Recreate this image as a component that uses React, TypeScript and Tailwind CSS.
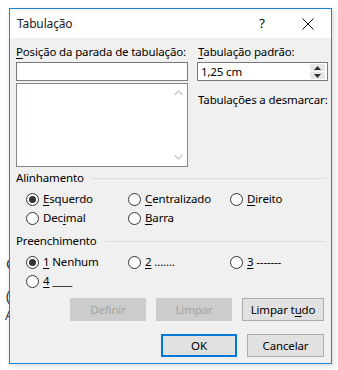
import React from 'react';

const font = { fontFamily: '"Noto Sans", "Open Sans", sans-serif', letterSpacing: '-0.15px' };

const Radio: React.FC<{ checked?: boolean }> = ({ checked }) => (
  <span className="flex h-[13px] w-[13px] shrink-0 items-center justify-center rounded-full border border-[#333333] bg-white">
    {checked && <span className="h-[7px] w-[7px] rounded-full bg-[#333333]" />}
  </span>
);

const Option: React.FC<{ checked?: boolean; width: string; children: React.ReactNode }> = ({ checked, width, children }) => (
  <div className={`flex items-center gap-[4px] ${width}`}>
    <Radio checked={checked} />
    <span className="leading-[16px]">{children}</span>
  </div>
);

const GroupTitle: React.FC<{ title: string }> = ({ title }) => (
  <div className="flex items-center gap-[8px] pr-[5px]">
    <span className="leading-[16px]">{title}</span>
    <span className="h-px flex-1 bg-[#dcdcdc]" />
  </div>
);

const App: React.FC = () => {
  return (
    <div className="relative h-[370px] w-[338px] overflow-hidden bg-white pt-[8px] pl-[9px] text-[11.5px] text-black" style={font}>
      {/* bits of the document behind the dialog */}
      <span className="absolute left-[6px] top-[257px] text-[14px] leading-none text-[#333]">C</span>
      <span className="absolute left-[6px] top-[289px] text-[14px] leading-none text-[#333]">(</span>
      <span className="absolute left-[5px] top-[309px] text-[13px] leading-none text-[#333]">A</span>

      <div className="relative flex h-[356px] w-[323px] flex-col border border-[#1883d7] bg-[#f0f0f0] shadow-[2px_2px_6px_rgba(0,0,0,0.15)]">
        {/* Title bar */}
        <div className="flex h-[29px] items-center bg-white pl-[7px]">
          <span className="flex-1 text-[12px] text-[#222]">Tabulação</span>
          <span className="w-[46px] text-center text-[13px]">?</span>
          <span className="flex w-[46px] items-center justify-center">
            <svg width="12" height="12" viewBox="0 0 12 12">
              <path d="M0.5 0.5 L11.5 11.5 M11.5 0.5 L0.5 11.5" stroke="#111" strokeWidth="1" />
            </svg>
          </span>
        </div>

        {/* Body */}
        <div className="flex flex-1 flex-col pl-[6px] pt-[6px]">
          <div className="flex gap-[9px]">
            <div className="flex w-[172px] flex-col">
              <span className="whitespace-nowrap leading-[16px]">
                <u className="underline-offset-2">P</u>osição da parada de tabulação:
              </span>
              <div className="mt-[2px] h-[19px] border border-[#7a7a7a] bg-white" />
              <div className="relative mt-[2px] h-[84px] border border-[#828790] bg-white">
                <div className="absolute right-0 top-0 flex h-full w-[17px] flex-col items-center justify-between py-[6px]">
                  <svg width="9" height="6" viewBox="0 0 9 6">
                    <path d="M0.5 5 L4.5 1 L8.5 5" stroke="#c4c4c4" strokeWidth="1.2" fill="none" />
                  </svg>
                  <svg width="9" height="6" viewBox="0 0 9 6">
                    <path d="M0.5 1 L4.5 5 L8.5 1" stroke="#c4c4c4" strokeWidth="1.2" fill="none" />
                  </svg>
                </div>
              </div>
            </div>
            <div className="flex w-[131px] flex-col">
              <span className="whitespace-nowrap pl-[1px] leading-[16px]">
                <u className="underline-offset-2">T</u>abulação padrão:
              </span>
              <div className="mt-[2px] flex h-[19px] items-center border border-[#7a7a7a] bg-white pl-[3px]">
                <span className="flex-1">1,25 cm</span>
                <div className="mr-[2px] flex h-[15px] w-[15px] flex-col gap-px">
                  <div className="flex flex-1 items-center justify-center bg-[#e6e6e6]">
                    <svg width="7" height="4" viewBox="0 0 7 4"><path d="M0 4 L3.5 0 L7 4Z" fill="#333" /></svg>
                  </div>
                  <div className="flex flex-1 items-center justify-center bg-[#e6e6e6]">
                    <svg width="7" height="4" viewBox="0 0 7 4"><path d="M0 0 L3.5 4 L7 0Z" fill="#333" /></svg>
                  </div>
                </div>
              </div>
              <span className="mt-[11px] whitespace-nowrap pl-[1px] leading-[16px]">Tabulações a desmarcar:</span>
            </div>
          </div>

          {/* Alinhamento */}
          <div className="mt-[3px]">
            <GroupTitle title="Alinhamento" />
            <div className="mt-[5px] flex flex-col gap-[3px] pl-[10px]">
              <div className="flex">
                <Option checked width="w-[102px]"><u className="underline-offset-2">E</u>squerdo</Option>
                <Option width="w-[102px]"><u className="underline-offset-2">C</u>entralizado</Option>
                <Option width="w-[80px]"><u className="underline-offset-2">D</u>ireito</Option>
              </div>
              <div className="flex">
                <Option width="w-[102px]">Dec<u className="underline-offset-2">i</u>mal</Option>
                <Option width="w-[102px]"><u className="underline-offset-2">B</u>arra</Option>
              </div>
            </div>
          </div>

          {/* Preenchimento */}
          <div className="mt-[7px]">
            <GroupTitle title="Preenchimento" />
            <div className="mt-[5px] flex flex-col gap-[3px] pl-[10px]">
              <div className="flex">
                <Option checked width="w-[102px]"><u className="underline-offset-2">1</u> Nenhum</Option>
                <Option width="w-[102px]"><u className="underline-offset-2">2</u> .......</Option>
                <Option width="w-[80px]"><u className="underline-offset-2">3</u> -------</Option>
              </div>
              <div className="flex">
                <Option width="w-[102px]"><u className="underline-offset-2">4</u> ____</Option>
              </div>
            </div>
          </div>

          {/* Buttons */}
          <div className="mt-[9px] flex justify-end gap-[10px] pr-[7px]">
            <button className="h-[23px] w-[76px] bg-[#cccccc] text-[#a3a3a3]">Definir</button>
            <button className="h-[23px] w-[76px] bg-[#cccccc] text-[#a3a3a3]">Limpar</button>
            <button className="h-[23px] w-[82px] border border-[#adadad] bg-[#e1e1e1]">
              Limpar t<u className="underline-offset-2">u</u>do
            </button>
          </div>
          <div className="mt-[13px] flex justify-end gap-[10px] pr-[7px]">
            <button className="h-[23px] w-[76px] border-2 border-[#0078d7] bg-[#e1e1e1]">OK</button>
            <button className="h-[23px] w-[77px] border border-[#adadad] bg-[#e1e1e1]">Cancelar</button>
          </div>
        </div>
      </div>
    </div>
  );
};

export default App;
